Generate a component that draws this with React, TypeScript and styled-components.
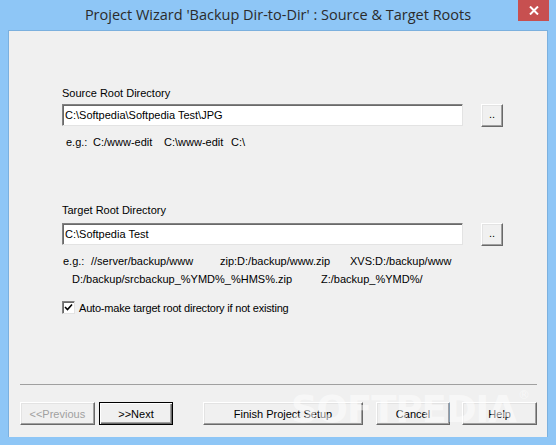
import React from 'react';
import styled, { createGlobalStyle } from 'styled-components';

const GlobalStyle = createGlobalStyle`
  html, body {
    margin: 0;
    padding: 0;
    background: #8ec6f6;
  }
  * {
    box-sizing: border-box;
  }
`;

const Window = styled.div`
  width: 556px;
  height: 445px;
  background: #8ec6f6;
  display: flex;
  flex-direction: column;
  font-family: 'Liberation Sans', Arial, sans-serif;
  font-size: 11px;
  color: #000;
  position: relative;
  overflow: hidden;
`;

const TitleBar = styled.div`
  height: 30px;
  display: flex;
  align-items: center;
  justify-content: center;
  position: relative;
`;

const Title = styled.div`
  font-family: 'Open Sans', 'Noto Sans', sans-serif;
  font-size: 14.5px;
  color: #2b2b2b;
  margin-top: -1px;
`;

const CloseButton = styled.div`
  position: absolute;
  top: 0;
  right: 7px;
  width: 31px;
  height: 21px;
  background: #c75050;
  display: flex;
  align-items: center;
  justify-content: center;
`;

const Client = styled.div`
  flex: 1;
  margin: 0 8px 8px 8px;
  background: #f0f0f0;
  border: 1px solid #7bb0de;
  border-bottom: none;
  display: flex;
  flex-direction: column;
  padding: 0 0 0 53px;
  position: relative;
`;

const Label = styled.div<{ $top: number }>`
  margin-top: ${p => p.$top}px;
  height: 14px;
  line-height: 14px;
`;

const InputRow = styled.div<{ $top: number }>`
  margin-top: ${p => p.$top}px;
  display: flex;
  align-items: flex-start;
  gap: 18px;
`;

const TextField = styled.div`
  width: 401px;
  height: 22px;
  background: #fff;
  border-top: 1px solid #828282;
  border-left: 1px solid #828282;
  border-right: 1px solid #e3e3e3;
  border-bottom: 1px solid #e3e3e3;
  box-shadow: inset 1px 1px 0 #696969;
  padding: 2px 0 0 2px;
  line-height: 16px;
  white-space: nowrap;
`;

const BrowseButton = styled.div`
  width: 22px;
  height: 23px;
  background: #f0f0f0;
  border-top: 1px solid #fff;
  border-left: 1px solid #fff;
  border-right: 1px solid #696969;
  border-bottom: 1px solid #696969;
  box-shadow: inset -1px -1px 0 #a0a0a0, inset 1px 1px 0 #e3e3e3;
  display: flex;
  align-items: center;
  justify-content: center;
  line-height: 1;
  padding-bottom: 2px;
`;

const Example = styled.div<{ $top: number }>`
  margin-top: ${p => p.$top}px;
  height: 14px;
  line-height: 14px;
  position: relative;
  white-space: nowrap;
`;

const Item = styled.span<{ $x: number }>`
  position: absolute;
  left: ${p => p.$x}px;
  top: 0;
`;

const CheckRow = styled.div`
  margin-top: 15px;
  display: flex;
  align-items: center;
  gap: 4px;
  height: 13px;
`;

const CheckBox = styled.div`
  width: 13px;
  height: 13px;
  background: #fff;
  border-top: 1px solid #828282;
  border-left: 1px solid #828282;
  border-right: 1px solid #e3e3e3;
  border-bottom: 1px solid #e3e3e3;
  box-shadow: inset 1px 1px 0 #696969;
  display: flex;
  align-items: center;
  justify-content: center;
`;

const CheckText = styled.span`
  letter-spacing: -0.2px;
`;

const Spacer = styled.div`
  flex: 1;
`;

const Footer = styled.div`
  margin-left: -42px;
  margin-right: 10px;
  border-top: 1px solid #a0a0a0;
  padding: 17px 0 12px 0;
  display: flex;
  align-items: center;
`;

const Button = styled.div<{ $w: number; $gap?: number; $default?: boolean; $disabled?: boolean }>`
  width: ${p => p.$w}px;
  height: 23px;
  margin-left: ${p => p.$gap ?? 0}px;
  background: #f0f0f0;
  border-top: 1px solid ${p => (p.$default ? '#000' : '#fff')};
  border-left: 1px solid ${p => (p.$default ? '#000' : '#fff')};
  border-right: 1px solid ${p => (p.$default ? '#000' : '#696969')};
  border-bottom: 1px solid ${p => (p.$default ? '#000' : '#696969')};
  box-shadow: ${p =>
    p.$default
      ? 'inset 1px 1px 0 #fff, inset -1px -1px 0 #696969, inset -2px -2px 0 #a0a0a0'
      : 'inset -1px -1px 0 #a0a0a0, inset 1px 1px 0 #e3e3e3'};
  color: ${p => (p.$disabled ? '#a0a0a0' : '#000')};
  display: flex;
  align-items: center;
  justify-content: center;
  font-size: 11px;
`;

const Watermark = styled.div`
  position: absolute;
  right: 18px;
  bottom: 6px;
  font-family: 'DejaVu Sans', 'Liberation Sans', sans-serif;
  font-weight: bold;
  font-size: 37px;
  letter-spacing: -1px;
  color: rgba(255, 255, 255, 0.5);
  pointer-events: none;
  white-space: nowrap;
`;

const Reg = styled.span`
  font-size: 12px;
  font-weight: normal;
  vertical-align: top;
  margin-left: 2px;
`;

const App: React.FC = () => {
  return (
    <>
      <GlobalStyle />
      <Window>
        <TitleBar>
          <Title>Project Wizard 'Backup Dir-to-Dir' : Source &amp; Target Roots</Title>
          <CloseButton>
            <svg width="10" height="9" viewBox="0 0 10 9">
              <path d="M1 0.5 L9 8.5 M9 0.5 L1 8.5" stroke="#fff" strokeWidth="2" />
            </svg>
          </CloseButton>
        </TitleBar>
        <Client>
          <Label $top={55}>Source Root Directory</Label>
          <InputRow $top={4}>
            <TextField>C:\Softpedia\Softpedia Test\JPG</TextField>
            <BrowseButton>..</BrowseButton>
          </InputRow>
          <Example $top={8}>
            <Item $x={4}>e.g.:</Item>
            <Item $x={31}>C:/www-edit</Item>
            <Item $x={102}>C:\www-edit</Item>
            <Item $x={169}>C:\</Item>
          </Example>
          <Label $top={54}>Target Root Directory</Label>
          <InputRow $top={6}>
            <TextField>C:\Softpedia Test</TextField>
            <BrowseButton>..</BrowseButton>
          </InputRow>
          <Example $top={8}>
            <Item $x={1}>e.g.:</Item>
            <Item $x={29}>//server/backup/www</Item>
            <Item $x={158}>zip:D:/backup/www.zip</Item>
            <Item $x={288}>XVS:D:/backup/www</Item>
          </Example>
          <Example $top={4}>
            <Item $x={10}>D:/backup/srcbackup_%YMD%_%HMS%.zip</Item>
            <Item $x={259}>Z:/backup_%YMD%/</Item>
          </Example>
          <CheckRow>
            <CheckBox>
              <svg width="9" height="9" viewBox="0 0 9 9">
                <path d="M1 4 L3.5 6.5 L8 1.5" stroke="#000" strokeWidth="1.6" fill="none" />
              </svg>
            </CheckBox>
            <CheckText>Auto-make target root directory if not existing</CheckText>
          </CheckRow>
          <Spacer />
          <Footer>
            <Button $w={75} $disabled>&lt;&lt;Previous</Button>
            <Button $w={75} $gap={4} $default>&gt;&gt;Next</Button>
            <Button $w={160} $gap={30}>Finish Project Setup</Button>
            <Button $w={75} $gap={13}>Cancel</Button>
            <Button $w={75} $gap={12}>Help</Button>
          </Footer>
          <Watermark>
            SOFTPEDIA<Reg>®</Reg>
          </Watermark>
        </Client>
      </Window>
    </>
  );
};

export default App;
